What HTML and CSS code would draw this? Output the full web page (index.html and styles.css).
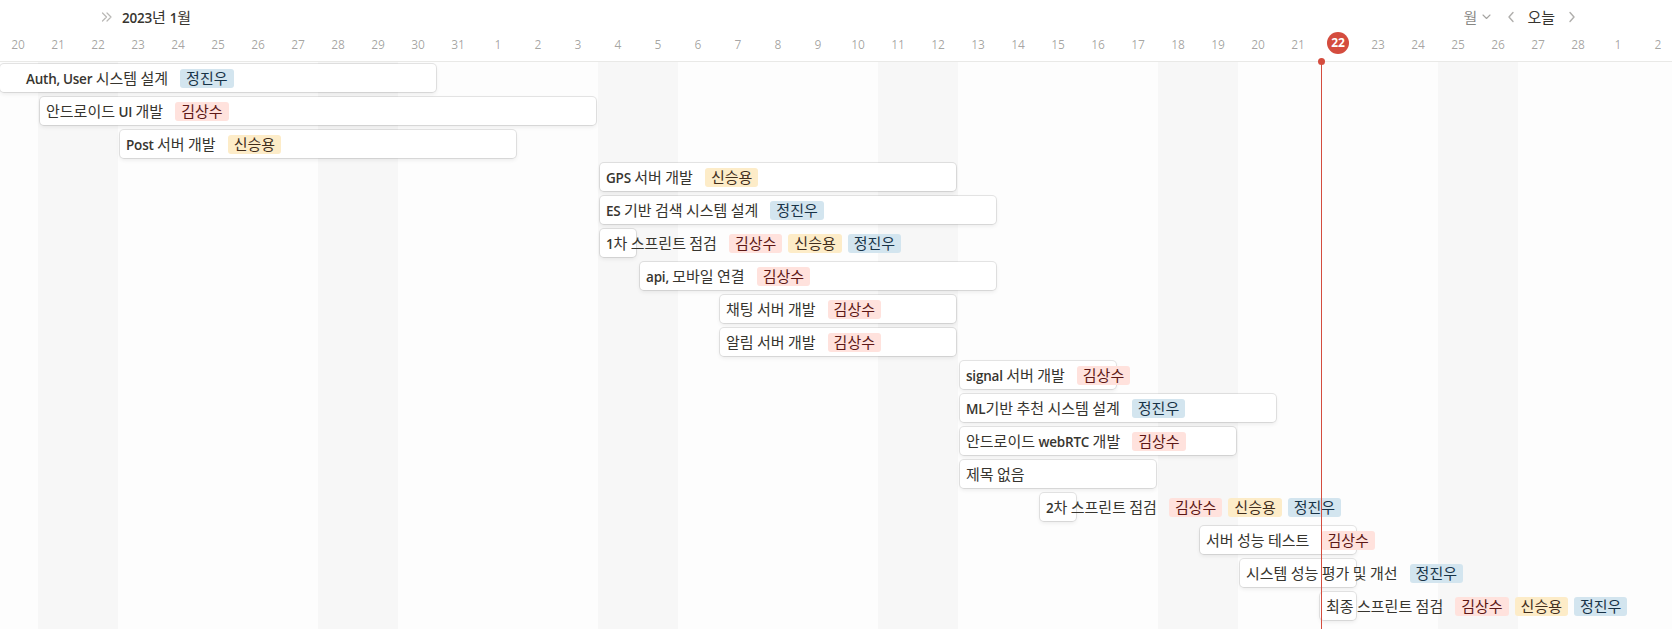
FILE: index.html
```html
<!DOCTYPE html>
<html lang="ko">
<head>
<meta charset="utf-8">
<title>Timeline</title>
<link rel="stylesheet" href="styles.css">
</head>
<body>
<div class="timeline">
  <div class="topbar">
    <div class="topbar-left">
      <svg class="dbl-chev" width="12" height="12" viewBox="0 0 12 12"><path d="M1.5 2 L5.5 6 L1.5 10 M6 2 L10 6 L6 10" fill="none" stroke="currentColor" stroke-width="1.2" stroke-linecap="round" stroke-linejoin="round"/></svg>
      <span class="month"><span class="lat">2023</span>년 <span class="lat">1</span>월</span>
    </div>
    <div class="topbar-right">
      <span class="view-btn">월<svg class="chev-down" width="9" height="6" viewBox="0 0 9 6"><path d="M1 1 L4.5 4.5 L8 1" fill="none" stroke="currentColor" stroke-width="1.1" stroke-linecap="round" stroke-linejoin="round"/></svg></span>
      <svg class="nav-chev" width="8" height="12" viewBox="0 0 8 12"><path d="M6 1.5 L2 6 L6 10.5" fill="none" stroke="currentColor" stroke-width="1.4" stroke-linecap="round" stroke-linejoin="round"/></svg>
      <span class="today-btn">오늘</span>
      <svg class="nav-chev" width="8" height="12" viewBox="0 0 8 12"><path d="M2 1.5 L6 6 L2 10.5" fill="none" stroke="currentColor" stroke-width="1.4" stroke-linecap="round" stroke-linejoin="round"/></svg>
    </div>
  </div>
  <div class="days">
    <span class="day">20</span><span class="day">21</span><span class="day">22</span><span class="day">23</span><span class="day">24</span><span class="day">25</span><span class="day">26</span><span class="day">27</span><span class="day">28</span><span class="day">29</span><span class="day">30</span><span class="day">31</span>
    <span class="day">1</span><span class="day">2</span><span class="day">3</span><span class="day">4</span><span class="day">5</span><span class="day">6</span><span class="day">7</span><span class="day">8</span><span class="day">9</span><span class="day">10</span><span class="day">11</span><span class="day">12</span><span class="day">13</span><span class="day">14</span><span class="day">15</span><span class="day">16</span><span class="day">17</span><span class="day">18</span><span class="day">19</span><span class="day">20</span><span class="day">21</span><span class="day"><span class="today-circle">22</span></span><span class="day">23</span><span class="day">24</span><span class="day">25</span><span class="day">26</span><span class="day">27</span><span class="day">28</span>
    <span class="day">1</span><span class="day">2</span>
  </div>
  <div class="board">
    <div class="row"><div class="card card-lead" style="margin-left:0px;width:436px"><span class="title"><span class="lat">Auth, User</span> 시스템 설계</span><span class="tags"><span class="tag blue">정진우</span></span></div></div>
    <div class="row"><div class="card" style="margin-left:40px;width:556px"><span class="title">안드로이드 <span class="lat">UI</span> 개발</span><span class="tags"><span class="tag red">김상수</span></span></div></div>
    <div class="row"><div class="card" style="margin-left:120px;width:396px"><span class="title"><span class="lat">Post</span> 서버 개발</span><span class="tags"><span class="tag yellow">신승용</span></span></div></div>
    <div class="row"><div class="card" style="margin-left:600px;width:356px"><span class="title"><span class="lat">GPS</span> 서버 개발</span><span class="tags"><span class="tag yellow">신승용</span></span></div></div>
    <div class="row"><div class="card" style="margin-left:600px;width:396px"><span class="title"><span class="lat">ES</span> 기반 검색 시스템 설계</span><span class="tags"><span class="tag blue">정진우</span></span></div></div>
    <div class="row"><div class="card" style="margin-left:600px;width:36px"><span class="title"><span class="lat">1</span>차 스프린트 점검</span><span class="tags"><span class="tag red">김상수</span><span class="tag yellow">신승용</span><span class="tag blue">정진우</span></span></div></div>
    <div class="row"><div class="card" style="margin-left:640px;width:356px"><span class="title"><span class="lat">api,</span> 모바일 연결</span><span class="tags"><span class="tag red">김상수</span></span></div></div>
    <div class="row"><div class="card" style="margin-left:720px;width:236px"><span class="title">채팅 서버 개발</span><span class="tags"><span class="tag red">김상수</span></span></div></div>
    <div class="row"><div class="card" style="margin-left:720px;width:236px"><span class="title">알림 서버 개발</span><span class="tags"><span class="tag red">김상수</span></span></div></div>
    <div class="row"><div class="card" style="margin-left:960px;width:156px"><span class="title"><span class="lat">signal</span> 서버 개발</span><span class="tags"><span class="tag red">김상수</span></span></div></div>
    <div class="row"><div class="card" style="margin-left:960px;width:316px"><span class="title"><span class="lat">ML</span>기반 추천 시스템 설계</span><span class="tags"><span class="tag blue">정진우</span></span></div></div>
    <div class="row"><div class="card" style="margin-left:960px;width:276px"><span class="title">안드로이드 <span class="lat">webRTC</span> 개발</span><span class="tags"><span class="tag red">김상수</span></span></div></div>
    <div class="row"><div class="card" style="margin-left:960px;width:196px"><span class="title">제목 없음</span></div></div>
    <div class="row"><div class="card" style="margin-left:1040px;width:36px"><span class="title"><span class="lat">2</span>차 스프린트 점검</span><span class="tags"><span class="tag red">김상수</span><span class="tag yellow">신승용</span><span class="tag blue">정진우</span></span></div></div>
    <div class="row"><div class="card" style="margin-left:1200px;width:156px"><span class="title">서버 성능 테스트</span><span class="tags"><span class="tag red">김상수</span></span></div></div>
    <div class="row"><div class="card" style="margin-left:1240px;width:116px"><span class="title">시스템 성능 평가 및 개선</span><span class="tags"><span class="tag blue">정진우</span></span></div></div>
    <div class="row"><div class="card" style="margin-left:1320px;width:36px"><span class="title">최종 스프린트 점검</span><span class="tags"><span class="tag red">김상수</span><span class="tag yellow">신승용</span><span class="tag blue">정진우</span></span></div></div>
    <div class="now-line"><span class="now-dot"></span></div>
  </div>
</div>
</body>
</html>
```

FILE: styles.css
```css
html, body {
  margin: 0;
  padding: 0;
  background: #ffffff;
}

body {
  font-family: "Open Sans", "Noto Sans CJK KR", sans-serif;
  color: rgb(55, 53, 47);
  font-size: 15px;
  overflow: hidden;
}

.timeline {
  width: 1672px;
  height: 629px;
  display: flex;
  flex-direction: column;
  overflow: hidden;
}

.lat {
  font-weight: 600;
  font-size: 13.5px;
  letter-spacing: -0.2px;
}

.topbar {
  height: 34px;
  display: flex;
  align-items: center;
  justify-content: space-between;
  flex: none;
}

.topbar-left {
  display: flex;
  align-items: center;
  padding-left: 101px;
}

.dbl-chev {
  color: #b9b8b5;
  margin-right: 9px;
}

.month {
  font-size: 15px;
  line-height: 20px;
  color: rgb(55, 53, 47);
}

.topbar-right {
  display: flex;
  align-items: center;
  padding-right: 96px;
}

.view-btn {
  display: flex;
  align-items: center;
  color: rgba(55, 53, 47, 0.6);
  font-size: 15px;
  line-height: 20px;
}

.chev-down {
  color: rgba(55, 53, 47, 0.45);
  margin-left: 5px;
}

.nav-chev {
  color: rgba(55, 53, 47, 0.4);
}

.view-btn + .nav-chev {
  margin-left: 16px;
}

.today-btn {
  margin: 0 13px 0 12px;
  font-size: 15px;
  line-height: 20px;
  color: rgb(55, 53, 47);
}

.days {
  flex: none;
  height: 27px;
  display: flex;
  margin-left: -2px;
  border-bottom: 1px solid #e9e9e7;
}

.day {
  flex: none;
  width: 40px;
  height: 20px;
  display: flex;
  align-items: center;
  justify-content: center;
  font-size: 12px;
  color: rgba(55, 53, 47, 0.45);
}

.today-circle {
  width: 22px;
  height: 22px;
  margin-top: -3px;
  border-radius: 50%;
  background: #d44c3e;
  color: #ffffff;
  font-weight: 700;
  font-size: 12px;
  display: flex;
  align-items: center;
  justify-content: center;
}

.board {
  position: relative;
  flex: 1;
  background-color: #fdfdfd;
  background-image: repeating-linear-gradient(90deg, #f7f7f7 0px, #f7f7f7 80px, transparent 80px, transparent 280px);
  background-position: 38px 0;
}

.row {
  height: 33px;
  box-sizing: border-box;
  padding-top: 2px;
}

.card {
  height: 28px;
  box-sizing: border-box;
  background: #ffffff;
  border-radius: 4px;
  box-shadow: rgba(15, 15, 15, 0.1) 0 0 0 1px, rgba(15, 15, 15, 0.08) 0 2px 4px;
  display: flex;
  align-items: center;
  padding: 0 6px;
  white-space: nowrap;
  overflow: visible;
}

.card-lead {
  padding-left: 26px;
}

.title {
  font-size: 15px;
  line-height: 20px;
  word-spacing: -0.5px;
  flex: none;
}

.tags {
  display: flex;
  gap: 6px;
  margin-left: 12px;
  flex: none;
}

.tag {
  height: 19px;
  line-height: 19px;
  padding: 0 6px;
  border-radius: 3px;
  font-size: 15px;
}

.tag.blue {
  background: rgb(211, 229, 239);
  color: rgb(24, 51, 71);
}

.tag.red {
  background: rgb(255, 226, 221);
  color: rgb(93, 23, 21);
}

.tag.yellow {
  background: rgb(253, 236, 200);
  color: rgb(64, 44, 27);
}

.now-line {
  position: absolute;
  left: 1321px;
  top: -1px;
  bottom: 0;
  width: 1px;
  background: #d44c3e;
  z-index: 2;
}

.now-dot {
  position: absolute;
  left: -3px;
  top: -3px;
  width: 7px;
  height: 7px;
  border-radius: 50%;
  background: #d44c3e;
}
```
